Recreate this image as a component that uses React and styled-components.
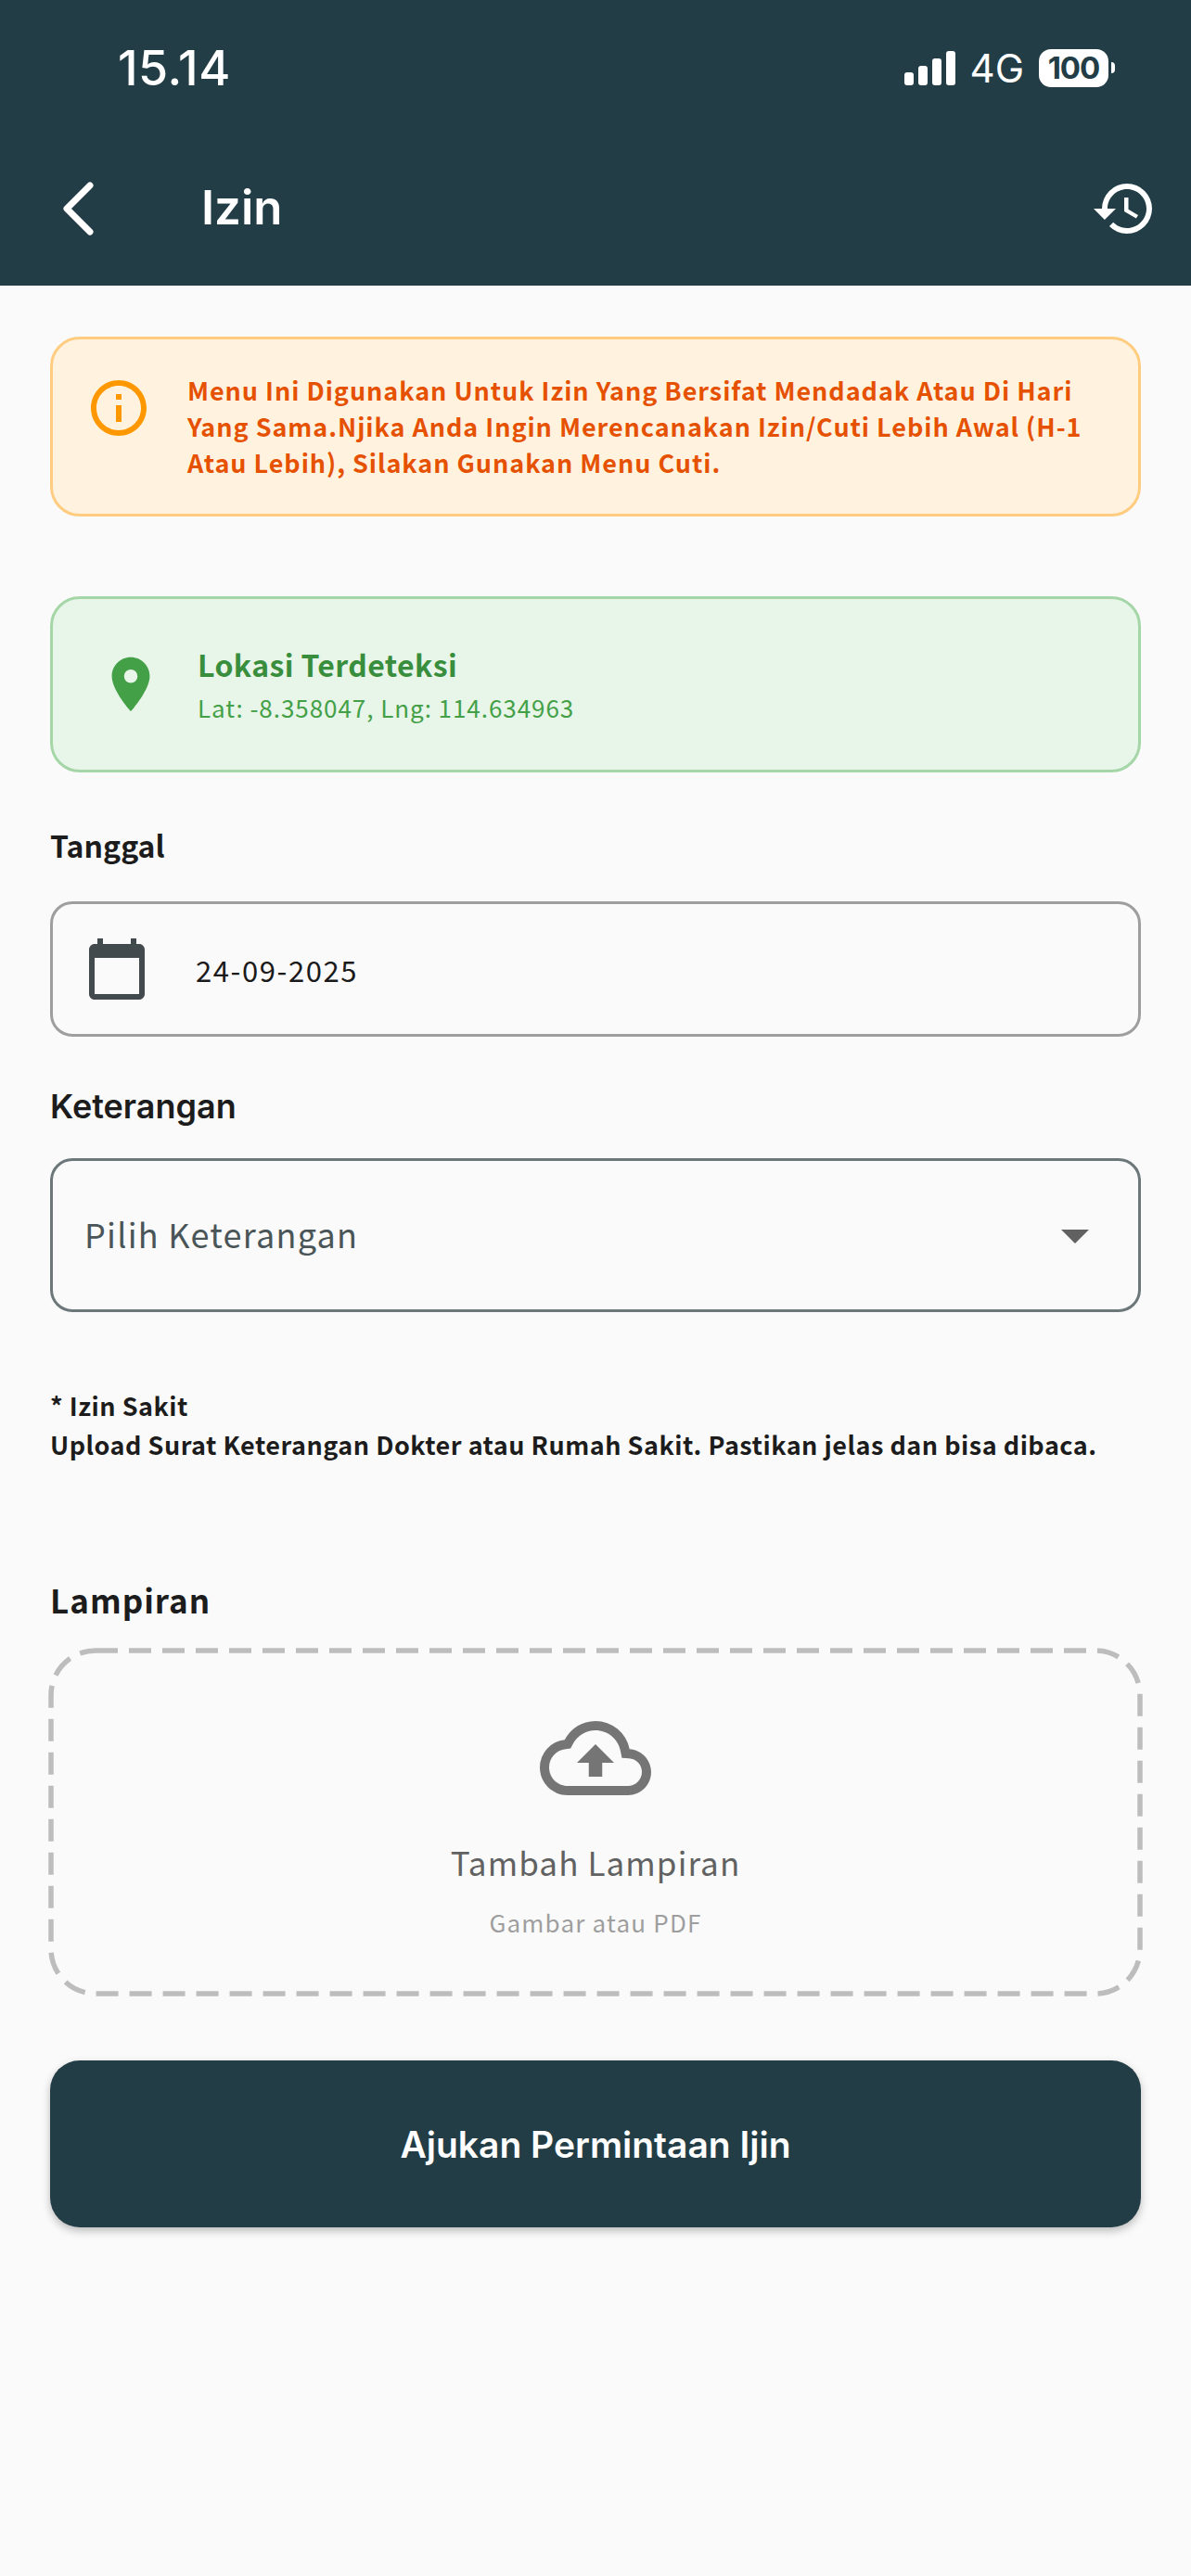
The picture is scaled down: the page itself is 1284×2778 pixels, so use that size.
import styled, { createGlobalStyle } from "styled-components";
import {
  MdInfoOutline,
  MdLocationOn,
  MdCalendarToday,
  MdOutlineCloudUpload,
  MdHistory,
  MdArrowDropDown,
} from "react-icons/md";

const GlobalStyle = createGlobalStyle`
  html, body {
    margin: 0;
    padding: 0;
    background: #fafafa;
  }
  * { box-sizing: border-box; }
  svg { flex-shrink: 0; }
`;

const BODY_FONT = `"Noto Sans CJK SC", "Noto Sans", sans-serif`;
const HEAD_FONT = `Inter, Roboto, sans-serif`;

const App = () => (
  <Page>
    <GlobalStyle />
    <Header>
      <StatusBar>
        <Clock>15.14</Clock>
        <StatusRight>
          <SignalBars>
            <Bar $h={14} />
            <Bar $h={21} />
            <Bar $h={29} />
            <Bar $h={37} />
          </SignalBars>
          <Network>4G</Network>
          <Battery>100</Battery>
          <BatteryTip />
        </StatusRight>
      </StatusBar>
      <NavBar>
        <BackIcon viewBox="0 0 36 58" fill="none">
          <path d="M31 4 L6 29 L31 54" stroke="#fff" strokeWidth="7" strokeLinecap="round" strokeLinejoin="round" />
        </BackIcon>
        <Title>Izin</Title>
        <HistoryIcon size={72} color="#fff" />
      </NavBar>
    </Header>

    <Content>
      <Alert>
        <MdInfoOutline size={72} color="#ff9800" />
        <AlertText>
          Menu Ini Digunakan Untuk Izin Yang Bersifat Mendadak Atau Di Hari Yang Sama.Njika Anda Ingin Merencanakan Izin/Cuti Lebih Awal (H-1 Atau Lebih), Silakan Gunakan Menu Cuti.
        </AlertText>
      </Alert>

      <Location>
        <MdLocationOn size={70} color="#43a047" />
        <div>
          <LocationTitle>Lokasi Terdeteksi</LocationTitle>
          <LocationCoords>Lat: -8.358047, Lng: 114.634963</LocationCoords>
        </div>
      </Location>

      <DateLabel>Tanggal</DateLabel>
      <DateField>
        <MdCalendarToday size={72} color="#424a4d" />
        <DateValue>24-09-2025</DateValue>
      </DateField>

      <HeadLabel>Keterangan</HeadLabel>
      <SelectField>
        <Placeholder>Pilih Keterangan</Placeholder>
        <MdArrowDropDown size={72} color="#616161" />
      </SelectField>

      <Note>
        * Izin Sakit
        <br />
        Upload Surat Keterangan Dokter atau Rumah Sakit. Pastikan jelas dan bisa dibaca.
      </Note>

      <AttachLabel>Lampiran</AttachLabel>
      <UploadBox>
        <DashedFrame viewBox="0 0 1180 376">
          <rect x="3" y="3" width="1174" height="370" rx="48" fill="none" stroke="#bdbdbd" strokeWidth="5.5" strokeDasharray="24 12" />
        </DashedFrame>
        <MdOutlineCloudUpload size={120} color="#757575" />
        <UploadTitle>Tambah Lampiran</UploadTitle>
        <UploadHint>Gambar atau PDF</UploadHint>
      </UploadBox>

      <SubmitButton>Ajukan Permintaan Ijin</SubmitButton>
    </Content>
  </Page>
);

const Page = styled.div`
  width: 1284px;
  min-height: 2778px;
  background: #fafafa;
  font-family: ${BODY_FONT};
`;

const Header = styled.header`
  height: 308px;
  background: #223d45;
  color: #fff;
  display: flex;
  flex-direction: column;
`;

const StatusBar = styled.div`
  height: 146px;
  display: flex;
  justify-content: space-between;
  align-items: center;
  padding: 0 14px 0 127px;
`;

const Clock = styled.span`
  font-family: Inter, sans-serif;
  font-size: 52px;
  font-weight: 500;
  letter-spacing: 0.5px;
`;

const StatusRight = styled.div`
  display: flex;
  align-items: center;
  padding-right: 68px;
`;

const SignalBars = styled.div`
  display: flex;
  align-items: flex-end;
  gap: 5px;
  margin-right: 16px;
`;

const Bar = styled.i`
  display: block;
  width: 10px;
  height: ${(p) => p.$h}px;
  border-radius: 3px;
  background: #fff;
`;

const Network = styled.span`
  font-family: Inter, sans-serif;
  font-size: 42px;
  font-weight: 400;
  margin-right: 16px;
`;

const Battery = styled.span`
  width: 75px;
  height: 41px;
  border-radius: 13px;
  background: #fff;
  color: #223d45;
  font-family: Inter, sans-serif;
  font-size: 33px;
  font-weight: 700;
  letter-spacing: -1px;
  display: flex;
  align-items: center;
  justify-content: center;
`;

const BatteryTip = styled.i`
  display: block;
  width: 4px;
  height: 12px;
  margin-left: 3px;
  border-radius: 0 4px 4px 0;
  background: #fff;
`;

const NavBar = styled.div`
  flex: 1;
  display: flex;
  align-items: center;
  padding: 0 36px 0 66px;
  margin-top: -8px;
`;

const BackIcon = styled.svg`
  width: 36px;
  height: 58px;
  margin: 4px 115px 0 0;
`;

const HistoryIcon = styled(MdHistory)`
  margin-top: 4px;
`;

const Title = styled.h1`
  flex: 1;
  margin: 0;
  font-family: ${HEAD_FONT};
  font-size: 51px;
  font-weight: 600;
`;

const Content = styled.main`
  padding: 55px 54px 0;
  display: flex;
  flex-direction: column;
`;

const Alert = styled.section`
  height: 194px;
  border: 3px solid #ffcc80;
  border-radius: 32px;
  background: #fff3e0;
  display: flex;
  align-items: flex-start;
  gap: 38px;
  padding: 38px 24px 0 35px;
`;

const AlertText = styled.p`
  margin: -3px 0 0;
  color: #e65100;
  font-size: 27px;
  font-weight: 700;
  line-height: 39px;
  letter-spacing: 0.95px;
`;

const Location = styled.section`
  height: 190px;
  margin-top: 86px;
  border: 3px solid #a5d6a7;
  border-radius: 32px;
  background: #e8f5e9;
  display: flex;
  align-items: center;
  gap: 37px;
  padding-left: 49px;
`;

const LocationTitle = styled.div`
  color: #388e3c;
  font-size: 32px;
  font-weight: 700;
  line-height: 44px;
  letter-spacing: 0.4px;
`;

const LocationCoords = styled.div`
  color: #43a047;
  font-size: 26px;
  font-weight: 400;
  line-height: 38px;
  margin-top: 6px;
  letter-spacing: 0.95px;
`;

const DateLabel = styled.label`
  margin-top: 56px;
  color: #1c1c1c;
  font-size: 32px;
  font-weight: 700;
  line-height: 44px;
`;

const DateField = styled.div`
  height: 146px;
  margin-top: 39px;
  border: 3px solid #9e9e9e;
  border-radius: 24px;
  display: flex;
  align-items: center;
  padding: 0 0 0 33px;
  gap: 49px;
`;

const DateValue = styled.span`
  color: #1a1a1a;
  font-size: 31px;
  font-weight: 400;
  letter-spacing: 1.6px;
`;

const HeadLabel = styled.label`
  margin-top: 51px;
  color: #1c1c1c;
  font-family: ${HEAD_FONT};
  font-size: 36px;
  font-weight: 600;
  line-height: 48px;
`;

const SelectField = styled.div`
  height: 166px;
  margin-top: 32px;
  border: 3px solid #6b7779;
  border-radius: 24px;
  display: flex;
  align-items: center;
  justify-content: space-between;
  padding: 0 32px 0 34px;
`;

const Placeholder = styled.span`
  color: #4a5558;
  font-size: 36px;
  font-weight: 400;
  letter-spacing: 1.25px;
  margin-top: -4px;
`;

const Note = styled.p`
  margin: 80px 0 0;
  color: #1c1c1c;
  font-size: 27px;
  font-weight: 700;
  line-height: 42px;
  letter-spacing: 0.5px;
`;

const AttachLabel = styled.label`
  margin-top: 122px;
  color: #1c1c1c;
  font-size: 35px;
  font-weight: 700;
  line-height: 48px;
  letter-spacing: 1px;
`;

const UploadBox = styled.section`
  position: relative;
  height: 376px;
  margin: 28px -2px 0;
  display: flex;
  flex-direction: column;
  align-items: center;
  padding-top: 59px;
`;

const DashedFrame = styled.svg`
  position: absolute;
  inset: 0;
  width: 100%;
  height: 100%;
`;

const UploadTitle = styled.div`
  margin-top: 27px;
  color: #616161;
  font-size: 35px;
  font-weight: 400;
  letter-spacing: 1.1px;
  line-height: 50px;
`;

const UploadHint = styled.div`
  margin-top: 20px;
  color: #9e9e9e;
  font-size: 26px;
  font-weight: 400;
  letter-spacing: 1.2px;
  line-height: 40px;
`;

const SubmitButton = styled.button`
  height: 180px;
  margin-top: 69px;
  border: 0;
  border-radius: 32px;
  background: #223d45;
  color: #fff;
  font-family: ${HEAD_FONT};
  font-size: 39px;
  font-weight: 600;
  box-shadow: 0 4px 10px rgba(0, 0, 0, 0.25);
`;

export default App;
